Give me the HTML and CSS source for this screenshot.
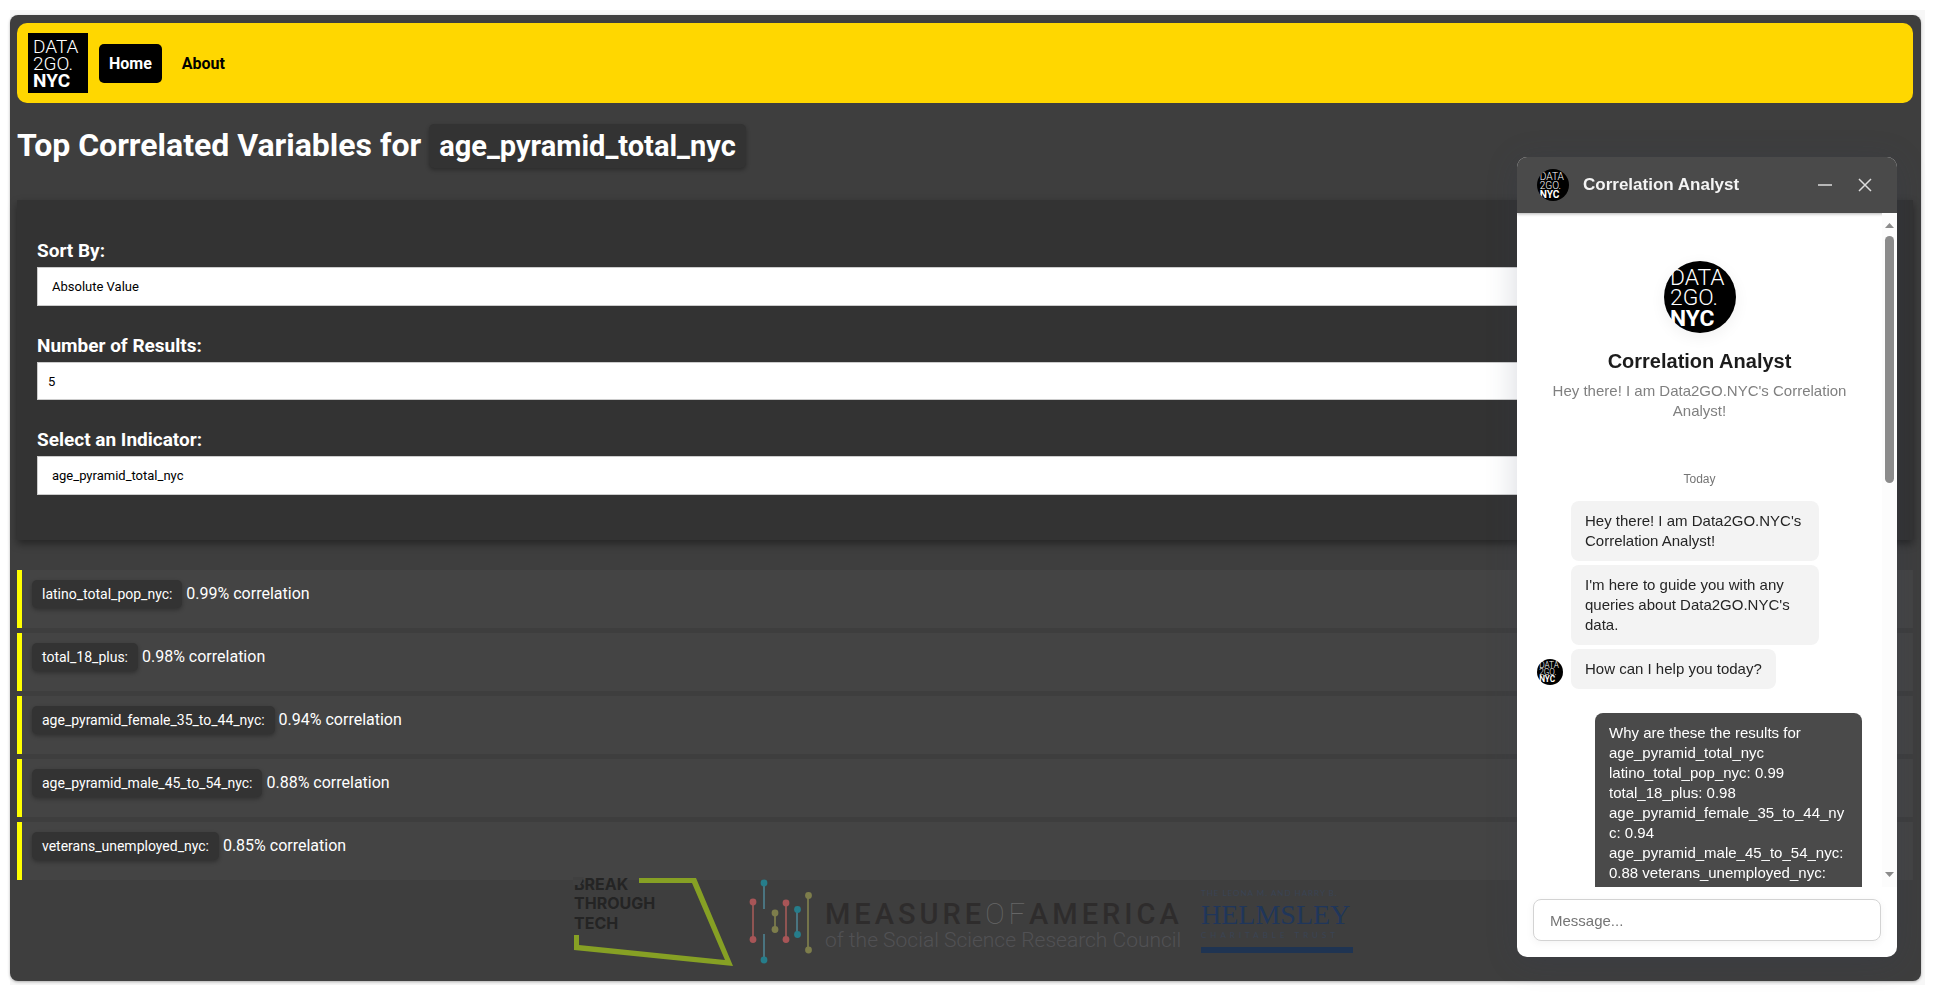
FILE: index.html
```html
<!DOCTYPE html>
<html lang="en">
<head>
<meta charset="utf-8">
<meta name="viewport" content="width=device-width, initial-scale=1">
<title>Data2GO.NYC Correlations</title>
<link rel="stylesheet" href="styles.css">
</head>
<body>
<svg class="defs" width="0" height="0" aria-hidden="true">
  <symbol id="logo" viewBox="0 0 60 60">
    <rect width="60" height="60" fill="#000"/>
    <text class="logo-thin" x="5" y="20">DATA</text>
    <text class="logo-thin" x="5" y="37">2GO.</text>
    <text class="logo-bold" x="5" y="54">NYC</text>
  </symbol>
</svg>

<div class="frame">
  <div class="app">
    <header class="topbar">
      <svg class="topbar-logo" role="img" aria-label="Data2GO.NYC"><use href="#logo"/></svg>
      <nav class="nav">
        <a class="nav-link active" href="#home">Home</a>
        <a class="nav-link" href="#about">About</a>
      </nav>
    </header>

    <h1 class="title">Top Correlated Variables for <span class="chip chip-title">age_pyramid_total_nyc</span></h1>

    <form class="filters">
      <div class="field">
        <label for="sort">Sort By:</label>
        <select id="sort"><option>Absolute Value</option></select>
      </div>
      <div class="field">
        <label for="count">Number of Results:</label>
        <input id="count" type="text" inputmode="numeric" value="5">
      </div>
      <div class="field">
        <label for="indicator">Select an Indicator:</label>
        <select id="indicator"><option>age_pyramid_total_nyc</option></select>
      </div>
    </form>

    <ul class="results">
      <li><span class="chip">latino_total_pop_nyc:</span> 0.99% correlation</li>
      <li><span class="chip">total_18_plus:</span> 0.98% correlation</li>
      <li><span class="chip">age_pyramid_female_35_to_44_nyc:</span> 0.94% correlation</li>
      <li><span class="chip">age_pyramid_male_45_to_54_nyc:</span> 0.88% correlation</li>
      <li><span class="chip">veterans_unemployed_nyc:</span> 0.85% correlation</li>
    </ul>

    <footer class="partners">
      <svg class="partner" width="160" height="90" viewBox="574 876 160 90">
        <g class="btt-text">
          <text x="574" y="890">BREAK</text>
          <text x="574" y="909">THROUGH</text>
          <text x="574" y="929">TECH</text>
        </g>
        <path d="M573 877h11l-4 8h-7z" fill="#404040"/>
        <path d="M639 878h57l37 88-159-16v-15h5v10l146 15-33-77h-53z" fill="#86a024"/>
      </svg>
      <svg class="partner" width="434" height="90" viewBox="750 876 434 90">
        <g stroke-width="2">
          <path d="M753 902v38M786 903v37" stroke="#8f5452"/>
          <path d="M764 883v26M764 934v26M797 909v26" stroke="#4a7480"/>
          <path d="M775 913v17M808 896v54" stroke="#74744a"/>
        </g>
        <g fill="#a85557"><circle cx="753" cy="902" r="3.4"/><circle cx="753" cy="939.500" r="3.4"/><circle cx="786" cy="903" r="3.4"/><circle cx="786" cy="939.500" r="3.4"/></g>
        <g fill="#267d8b"><circle cx="764" cy="883" r="3.4"/><circle cx="764" cy="960" r="3.4"/><circle cx="797.500" cy="909.500" r="3.4"/><circle cx="797.500" cy="934.500" r="3.4"/></g>
        <g fill="#7d7d4b"><circle cx="775" cy="913" r="3.4"/><circle cx="775" cy="929.500" r="3.4"/><circle cx="808.500" cy="895.500" r="3.4"/><circle cx="808.500" cy="950" r="3.4"/></g>
        <text class="moa-name" x="825" y="924">MEASURE<tspan class="moa-of">OF</tspan>AMERICA</text>
        <text class="moa-sub" x="825" y="947">of the Social Science Research Council</text>
      </svg>
      <svg class="partner" width="156" height="90" viewBox="1200 876 156 90">
        <text class="hel-small" x="1201" y="896">THE LEONA M. AND HARRY B.</text>
        <text class="hel-name" x="1201" y="924">HELMSLEY</text>
        <text class="hel-small hel-wide" x="1201" y="938">CHARITABLE TRUST</text>
        <rect x="1201" y="947" width="152" height="6" fill="#1f3452"/>
      </svg>
    </footer>
  </div>
</div>

<section class="chat" aria-label="Correlation Analyst chat">
  <header class="chat-head">
    <svg class="avatar avatar-head"><use href="#logo"/></svg>
    <h2 class="chat-title">Correlation Analyst</h2>
    <button class="icon-btn" type="button" aria-label="Minimize"><svg width="16" height="16" viewBox="0 0 16 16"><path d="M1 8h14"/></svg></button>
    <button class="icon-btn" type="button" aria-label="Close"><svg width="16" height="16" viewBox="0 0 16 16"><path d="M2 2l12 12M14 2L2 14"/></svg></button>
  </header>

  <div class="chat-body">
    <div class="messages">
      <div class="intro">
        <svg class="avatar avatar-intro"><use href="#logo"/></svg>
        <h3 class="intro-name">Correlation Analyst</h3>
        <p class="intro-text">Hey there! I am Data2GO.NYC's Correlation Analyst!</p>
      </div>
      <p class="day">Today</p>
      <div class="bot">
        <svg class="avatar avatar-bot"><use href="#logo"/></svg>
        <div class="bot-bubbles">
          <p class="bubble">Hey there! I am Data2GO.NYC's Correlation Analyst!</p>
          <p class="bubble">I'm here to guide you with any queries about Data2GO.NYC's data.</p>
          <p class="bubble">How can I help you today?</p>
        </div>
      </div>
      <p class="bubble bubble-user">Why are these the results for age_pyramid_total_nyc latino_total_pop_nyc: 0.99 total_18_plus: 0.98 age_pyramid_female_35_to_44_nyc: 0.94 age_pyramid_male_45_to_54_nyc: 0.88 veterans_unemployed_nyc:</p>
    </div>
    <div class="scrollbar" aria-hidden="true">
      <svg width="9" height="5" viewBox="0 0 9 5"><path d="M0 5L4.500 0 9 5z"/></svg>
      <div class="track"><div class="thumb"></div></div>
      <svg width="9" height="5" viewBox="0 0 9 5"><path d="M0 0L4.500 5 9 0z"/></svg>
    </div>
  </div>

  <div class="composer">
    <input class="composer-input" type="text" placeholder="Message..." aria-label="Message">
  </div>
</section>
</body>
</html>
```

FILE: styles.css
```css
* {
  box-sizing: border-box;
}

body {
  margin: 0;
  background: #fff;
  color: #fff;
  font: 16px/20px Roboto, sans-serif;
}

h1, h2, h3, p, ul {
  margin: 0;
  padding: 0;
}

.defs {
  display: none;
}

.logo-thin,
.logo-bold {
  font-family: Roboto, sans-serif;
  font-size: 19px;
  fill: #fff;
}

.logo-thin {
  font-weight: 300;
}

.logo-bold {
  font-weight: 700;
}

/* Page shell */
.frame {
  margin: 10px 15px 20px 10px;
  padding: 5px 4px 4px 0;
  background: #f7f7f7;
}

.app {
  padding: 8px 8px 15px 7px;
  border-radius: 8px;
  background: #3e3e3e;
  box-shadow: 0 1px 3px rgba(0, 0, 0, 0.3);
}

.topbar {
  display: flex;
  align-items: center;
  gap: 11px;
  padding: 10px 11px;
  border-radius: 10px;
  background: #ffd700;
}

.topbar-logo {
  width: 60px;
  height: 60px;
}

.nav {
  display: flex;
  gap: 10px;
}

.nav-link {
  padding: 10px;
  border-radius: 5px;
  color: #000;
  font-weight: 700;
  line-height: 19px;
  text-decoration: none;
}

.nav-link.active {
  background: #000;
  color: #fff;
}

.title {
  margin: 20px 0 32px;
  font-size: 32px;
  line-height: 44px;
}

.chip {
  display: inline-block;
  padding: 5px 10px;
  border-radius: 5px;
  background: #333;
  box-shadow: 0 2px 4px rgba(0, 0, 0, 0.3);
  font-size: 14px;
  line-height: 18px;
}

.chip-title {
  font-size: 29px;
  line-height: 34px;
}

/* Filters */
.filters {
  display: flex;
  flex-direction: column;
  gap: 29px;
  padding: 40px 20px 45px;
  background: #333;
  box-shadow: 0 4px 8px rgba(0, 0, 0, 0.4);
}

.field {
  display: flex;
  flex-direction: column;
  gap: 5px;
}

.field label {
  font-size: 19px;
  font-weight: 700;
  line-height: 22px;
}

.field select,
.field input {
  width: 100%;
  height: 39px;
  padding: 0 14px;
  border: 1px solid #ccc;
  border-radius: 0;
  appearance: none;
  background: #fff;
  color: #000;
  font: 13px Roboto, sans-serif;
}

.field input {
  height: 38px;
  padding: 0 10px;
}

/* Results */
.results {
  display: flex;
  flex-direction: column;
  gap: 5px;
  margin-top: 30px;
  list-style: none;
}

.results li {
  height: 58px;
  padding: 10px;
  border-left: 5px solid #ff0;
  background: #444;
}

/* Partner logos */
.partners {
  display: flex;
  justify-content: center;
  gap: 16px;
  margin-top: -4px;
}

.partner {
  overflow: visible;
}

.btt-text {
  font: 700 16px Inter, sans-serif;
  fill: #242424;
}

.moa-name {
  font: 500 29px Roboto, sans-serif;
  letter-spacing: 4px;
  fill: #2e2c2c;
}

.moa-of {
  font-weight: 100;
  fill: #666;
}

.moa-sub {
  font: 300 21px Roboto, sans-serif;
  fill: #515154;
}

.hel-small {
  font: 8px Lato, sans-serif;
  letter-spacing: 1px;
  fill: #3a4454;
}

.hel-wide {
  letter-spacing: 4px;
}

.hel-name {
  font: 28px "Liberation Serif", serif;
  fill: #20365a;
}

/* Chat widget */
.chat {
  position: fixed;
  right: 43px;
  bottom: 49px;
  display: flex;
  flex-direction: column;
  width: 380px;
  height: 800px;
  overflow: hidden;
  border-radius: 10px;
  background: #fff;
  box-shadow: 0 4px 32px rgba(50, 60, 90, 0.2);
  color: #252525;
  font: 15px/20px "Liberation Sans", Arial, sans-serif;
}

.chat-head {
  display: flex;
  align-items: center;
  padding: 12px 20px;
  background: #4a4a4a;
  box-shadow: 0 1px 3px rgba(0, 0, 0, 0.3);
  color: #f4f4f4;
}

.avatar {
  flex: none;
  border-radius: 50%;
}

.avatar-head {
  width: 32px;
  height: 32px;
}

.chat-title {
  flex: 1;
  margin-left: 14px;
  font-size: 17px;
}

.icon-btn {
  display: flex;
  margin-left: 24px;
  padding: 0;
  border: 0;
  background: none;
}

.icon-btn:last-child {
  margin-right: 4px;
}

.icon-btn path {
  fill: none;
  stroke: #ddd;
  stroke-width: 1.5;
}

.chat-body {
  display: flex;
  flex: 1;
  min-height: 0;
}

.messages {
  flex: 1;
  padding: 48px 20px 0;
  overflow-y: auto;
  scrollbar-width: none;
}

.intro {
  display: flex;
  flex-direction: column;
  align-items: center;
  text-align: center;
}

.avatar-intro {
  width: 72px;
  height: 72px;
  box-shadow: 0 4px 16px rgba(0, 0, 0, 0.06);
}

.intro-name {
  margin-top: 16px;
  color: #1c1c1c;
  font-size: 20px;
  line-height: 24px;
}

.intro-text {
  margin-top: 8px;
  color: #808080;
}

.day {
  margin: 48px 0 12px;
  color: #757575;
  font-size: 12px;
  text-align: center;
}

.bot {
  display: flex;
  align-items: flex-end;
  gap: 8px;
  padding-right: 43px;
}

.avatar-bot {
  width: 26px;
  height: 26px;
  margin-bottom: 4px;
}

.bot-bubbles {
  display: flex;
  flex: 1;
  flex-direction: column;
  align-items: flex-start;
  gap: 4px;
}

.bubble {
  padding: 10px 14px;
  border-radius: 8px;
  background: #f3f3f3;
}

.bubble-user {
  width: 267px;
  margin: 24px 0 0 auto;
  padding-bottom: 30px;
  background: #4a4a4a;
  color: #fff;
  overflow-wrap: anywhere;
}

.scrollbar {
  display: flex;
  flex-direction: column;
  align-items: center;
  gap: 8px;
  width: 15px;
  padding: 10px 0;
  background: #fcfcfc;
}

.scrollbar path {
  fill: #8b8b8b;
}

.track {
  flex: 1;
}

.thumb {
  width: 9px;
  height: 247px;
  border-radius: 5px;
  background: #8b8b8b;
}

.composer {
  padding: 12px 16px 16px;
}

.composer-input {
  display: block;
  width: 100%;
  height: 42px;
  padding: 0 16px;
  border: 1px solid #d3d3d3;
  border-radius: 8px;
  background: #fff;
  box-shadow: 0 2px 8px rgba(0, 0, 0, 0.05);
  color: #252525;
  font: inherit;
}

.composer-input::placeholder {
  color: #757575;
}
```
